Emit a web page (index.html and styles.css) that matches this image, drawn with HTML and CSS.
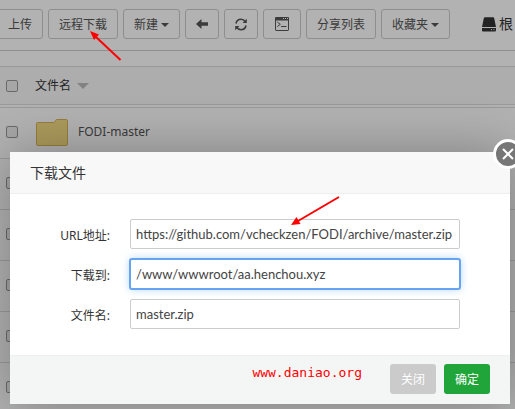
FILE: index.html
```html
<!DOCTYPE html>
<html lang="zh-CN">
<head>
<meta charset="utf-8">
<meta name="viewport" content="width=device-width, initial-scale=1">
<title>下载文件</title>
<link rel="stylesheet" href="styles.css">
</head>
<body>
<main class="page">
  <div class="toolbar">
    <button class="tool tool-upload" type="button">上传</button>
    <button class="tool" type="button">远程下载</button>
    <button class="tool tool-menu" type="button">新建<span class="caret"></span></button>
    <button class="tool tool-icon" type="button" aria-label="后退">
      <svg width="12" height="10" viewBox="0 0 12 10"><path d="M0 5 5.500 0V3.300H12V6.700H5.500V10Z" fill="currentColor"/></svg>
    </button>
    <button class="tool tool-icon" type="button" aria-label="刷新">
      <svg width="12" height="13" viewBox="0 0 12 13" fill="none" stroke="currentColor" stroke-width="1.600"><path d="M1 5.500C1.500 3 3.500 1.300 6 1.300 7.800 1.300 9.300 2.200 10.300 3.700M11 7.500C10.500 10 8.500 11.700 6 11.700 4.200 11.700 2.700 10.800 1.700 9.300"/><path d="M11.800.8V5H7.600ZM.2 12.200V8H4.400Z" fill="currentColor" stroke="none"/></svg>
    </button>
    <button class="tool tool-icon tool-terminal" type="button" aria-label="终端">
      <svg width="14" height="14" viewBox="0 0 14 14" fill="none" stroke="currentColor"><rect x=".5" y=".5" width="13" height="13" rx=".6"/><path d="M0 2H14" stroke-width="3"/><path d="M8 1.500H9M10 1.500H11M12 1.500H13" stroke="#fff"/><path d="m2.300 5 3 2.300-3 2.300M6 9.500H11.500"/></svg>
    </button>
    <button class="tool" type="button">分享列表</button>
    <button class="tool tool-menu" type="button">收藏夹<span class="caret"></span></button>
    <a class="disk" href="#">
      <svg width="14" height="15" viewBox="0 0 14 15" fill="currentColor"><path d="M3 .3H11Q12 .3 12.200 1.200L14 10H0L1.800 1.200Q2 .3 3 .3ZM0 11H14V13.500Q14 14.500 13 14.500H1Q0 14.500 0 13.500Z"/><path d="M9 12.700H10M11.500 12.700H12.500" stroke="#fff"/></svg>
      <span>根</span>
    </a>
  </div>
  <table class="files">
    <thead>
      <tr><th class="pick"><input type="checkbox" aria-label="全选"></th><th><span class="sort">文件名</span></th></tr>
    </thead>
    <tbody>
      <tr class="gap"><td colspan="2"></td></tr>
      <tr>
        <td class="pick"><input type="checkbox" aria-label="选择 FODI-master"></td>
        <td><span class="folder"><svg width="33" height="27" viewBox="0 0 33 27"><path d="M2.500 3.500H19L21.500.5H31.500Q32.500.5 32.500 2V25Q32.500 26.500 31 26.500H3Q1.500 26.500 1.500 25V4.500Q1.500 3.500 2.500 3.500Z" fill="#f8df85" stroke="#dcb556"/></svg>FODI-master</span></td>
      </tr>
      <tr><td class="pick"><input type="checkbox" aria-label="选择"></td><td></td></tr>
      <tr><td class="pick"><input type="checkbox" aria-label="选择"></td><td></td></tr>
      <tr><td class="pick"><input type="checkbox" aria-label="选择"></td><td></td></tr>
      <tr><td class="pick"><input type="checkbox" aria-label="选择"></td><td></td></tr>
      <tr><td class="pick"><input type="checkbox" aria-label="选择"></td><td></td></tr>
    </tbody>
  </table>
</main>
<div class="scrim">
  <form class="dialog" role="dialog" aria-labelledby="dialog-title">
    <h2 class="dialog-title" id="dialog-title">下载文件</h2>
    <div class="fields">
      <label for="url">URL地址:</label>
      <input id="url" type="text" value="https://github.com/vcheckzen/FODI/archive/master.zip">
      <label for="path">下载到:</label>
      <input id="path" class="active" type="text" value="/www/wwwroot/aa.henchou.xyz">
      <label for="name">文件名:</label>
      <input id="name" type="text" value="master.zip">
    </div>
    <div class="actions">
      <span class="site">www.daniao.org</span>
      <button class="action" type="button">关闭</button>
      <button class="action action-ok" type="button">确定</button>
    </div>
    <button class="close" type="button" aria-label="关闭窗口">
      <svg width="12" height="12" viewBox="0 0 12 12" fill="none" stroke="#fff" stroke-width="2"><path d="m1 1 10 10M11 1 1 11"/></svg>
    </button>
  </form>
</div>
<svg class="arrow arrow-tool" width="32" height="32" viewBox="0 0 32 32"><path d="M30.500 29 6 6" stroke="#f00" stroke-width="2"/><path d="M0 0 9 3.500 4 9Z" fill="#f00"/></svg>
<svg class="arrow arrow-url" width="50" height="32" viewBox="0 0 50 32"><path d="M48 2 7 26" stroke="#f00" stroke-width="2"/><path d="M0 30 5.500 22 9.500 29Z" fill="#f00"/></svg>
</body>
</html>
```
FILE: styles.css
```css
* { box-sizing: border-box; }

html, body { height: 100%; }

body {
  margin: 0;
  overflow: hidden;
  position: relative;
  background: #fff;
  color: #333;
  font: 12px/18px "Noto Sans", "Noto Sans CJK SC", sans-serif;
}

button, input { font: inherit; color: inherit; margin: 0; }

.page { height: 100%; overflow: hidden; }

.toolbar {
  display: flex;
  gap: 5px;
  height: 51px;
  padding-top: 9px;
  border-bottom: 1px solid #ccc;
  white-space: nowrap;
}

.tool {
  display: flex;
  flex: none;
  align-items: center;
  justify-content: center;
  height: 30px;
  padding: 2px 10px 0;
  border: 1px solid #ccc;
  border-radius: 3px;
  background: #fff;
  color: #555;
}

.tool-upload { margin-left: -3px; }
.tool-menu { gap: 3px; }
.tool-icon { width: 34px; padding-top: 0; }
.tool-terminal { width: 38px; }

.caret {
  border: 4px solid transparent;
  border-top-color: currentColor;
  border-bottom: 0;
}

.disk {
  display: flex;
  flex: none;
  align-items: center;
  gap: 3px;
  height: 30px;
  margin-left: 27px;
  color: #333;
  font-size: 14px;
  text-decoration: none;
}

.files {
  width: 100%;
  margin-top: 15px;
  border-collapse: separate;
  border-spacing: 0;
  border-top: 1px solid #ddd;
}

.files th {
  height: 38px;
  padding: 0;
  border-bottom: 1px solid #ddd;
  background: #f8f8f8;
  font-weight: normal;
  text-align: left;
}

.files td {
  height: 51px;
  padding: 0 0 2px;
  border-bottom: 1px solid #ddd;
}

.files .gap td { height: 3px; padding: 0; }
.files .pick { width: 35px; padding-left: 6px; }

.pick input {
  appearance: none;
  display: block;
  width: 12px;
  height: 12px;
  border: 1px solid #999;
  border-radius: 2px;
  background: #eee;
}

.sort { display: flex; align-items: center; gap: 6px; }

.sort::after {
  content: "";
  border: 6px solid transparent;
  border-top-color: #bbb;
  border-bottom: 0;
}

.folder {
  display: flex;
  align-items: center;
  gap: 10px;
  color: #555;
}

.scrim {
  position: absolute;
  inset: 0;
  padding: 152px 5px 0 10px;
  background: rgba(0, 0, 0, .3);
}

.dialog {
  position: relative;
  background: #fff;
  box-shadow: 1px 1px 50px rgba(0, 0, 0, .3);
}

.dialog-title {
  margin: 0;
  padding: 0 20px;
  border-bottom: 1px solid #eee;
  background: #f8f8f8;
  font-size: 14px;
  font-weight: normal;
  line-height: 41px;
}

.fields {
  display: grid;
  grid-template-columns: 80px 1fr;
  gap: 10px 20px;
  align-items: center;
  padding: 25px 50px 26px 20px;
}

.fields label { padding-top: 4px; text-align: right; }

.fields input {
  width: 100%;
  height: 30px;
  padding: 0 5px;
  border: 1px solid #ccc;
  border-radius: 2px;
  outline: 0;
  background: #fff;
  color: #444;
  font-family: Lato, "Noto Sans CJK SC", sans-serif;
  font-size: 13px;
}

.fields .active {
  border-color: #66a3f3;
  box-shadow: 0 0 0 1px #66a3f3, 0 0 8px rgba(102, 175, 233, .6);
}

.actions {
  display: flex;
  align-items: center;
  justify-content: flex-end;
  gap: 8px;
  padding: 8px 20px 10px;
  border-top: 1px solid #edf1f2;
  background: #f4f6f6;
}

.site {
  align-self: flex-start;
  margin-right: 20px;
  color: #f00;
  font: 13px/18px "DejaVu Sans Mono", monospace;
}

.action {
  height: 30px;
  padding: 2px 11px 0;
  border: 0;
  border-radius: 3px;
  background: #cbcbcb;
  color: #fff;
}

.action-ok { background: #20a53a; }

.close {
  position: absolute;
  top: -13px;
  right: -13px;
  display: flex;
  align-items: center;
  justify-content: center;
  width: 30px;
  height: 30px;
  padding: 0;
  border: 3px solid #fff;
  border-radius: 50%;
  background: #777;
}

.arrow { position: absolute; }
.arrow-tool { left: 90px; top: 31px; }
.arrow-url { left: 291px; top: 195px; }
```
